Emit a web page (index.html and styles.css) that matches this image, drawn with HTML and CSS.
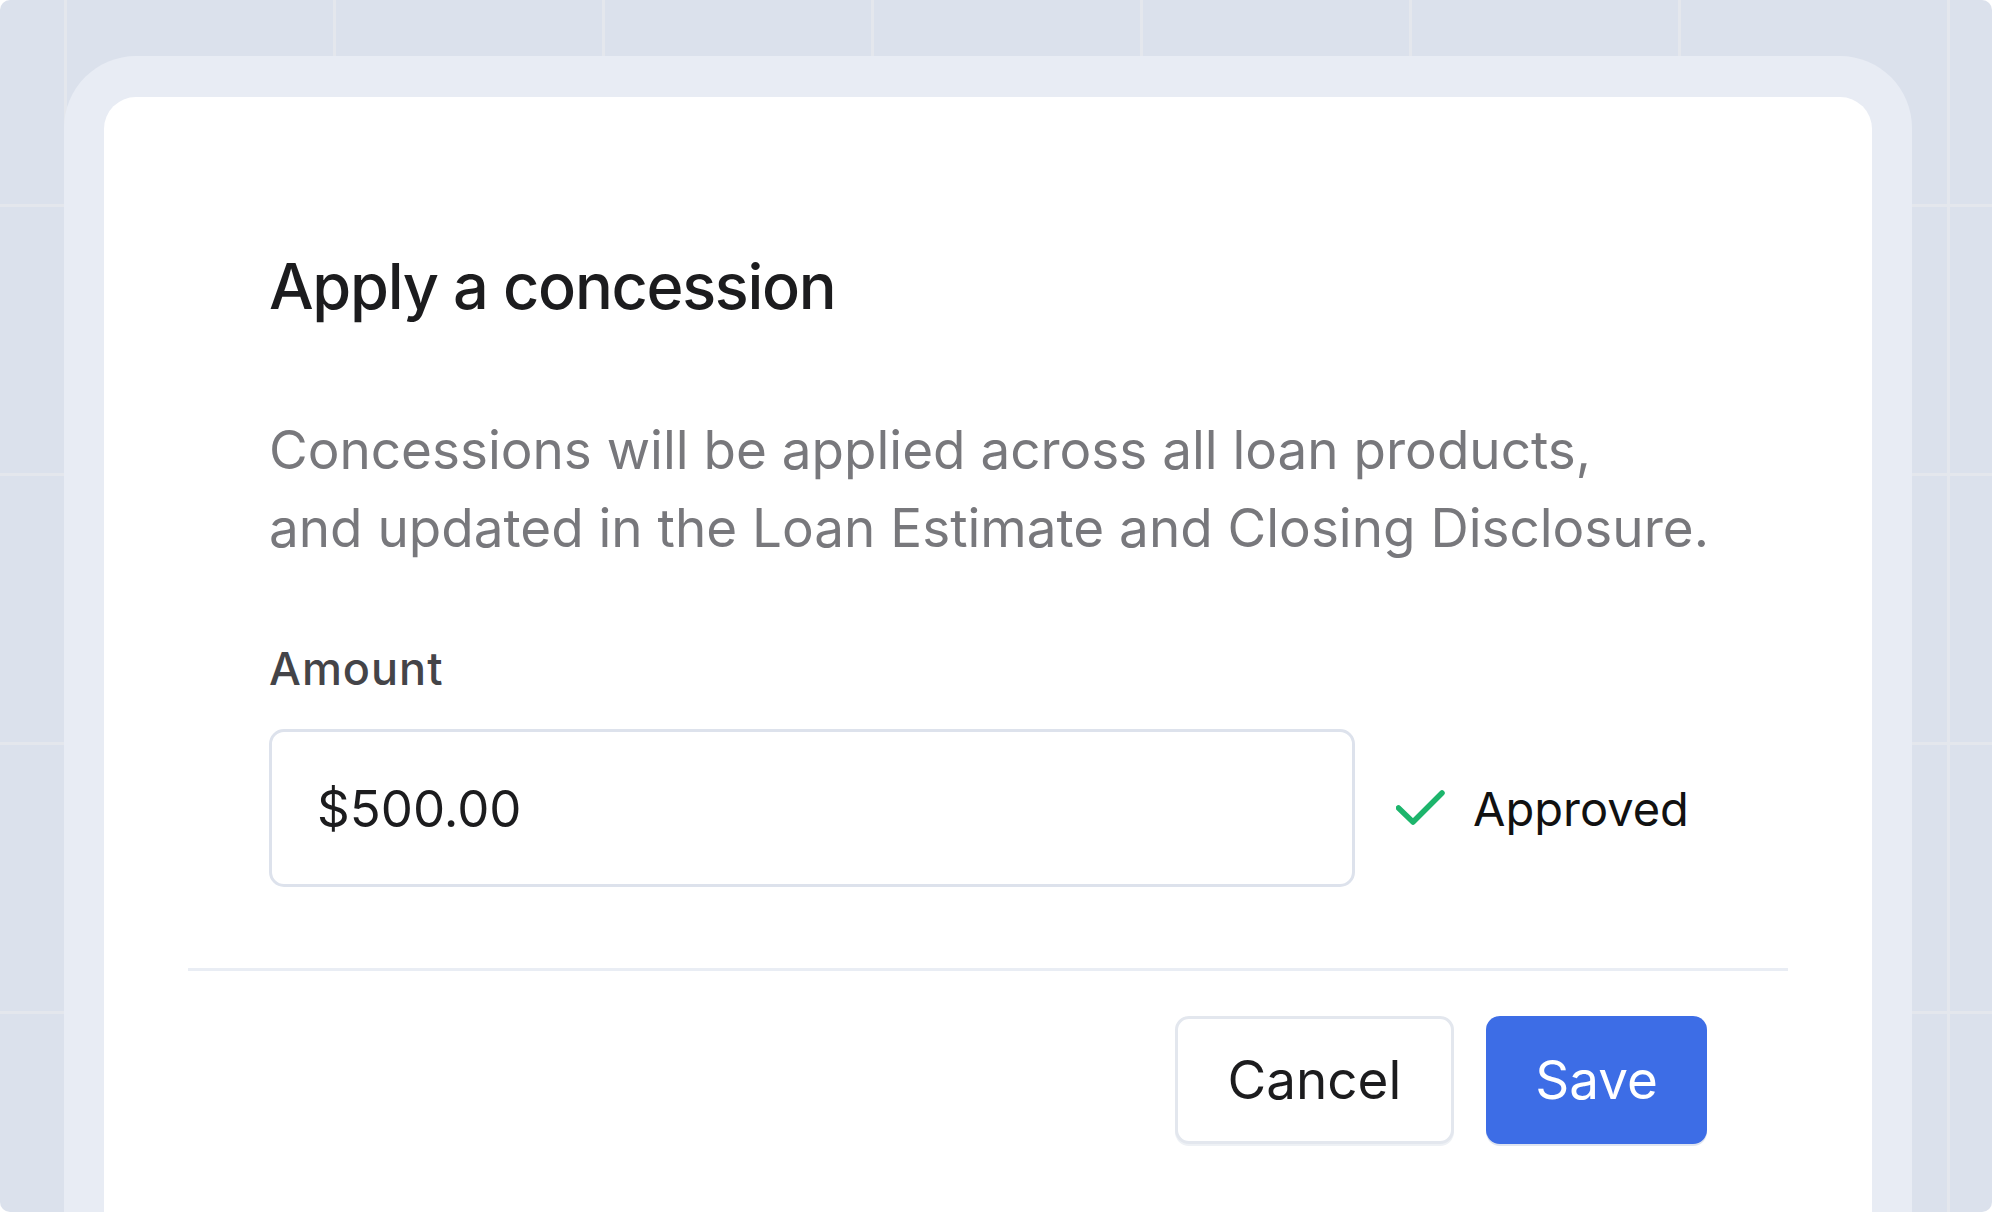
FILE: index.html
```html
<!DOCTYPE html>
<html lang="en">
<head>
<meta charset="utf-8">
<title>Apply a concession</title>
<link rel="stylesheet" href="styles.css">
</head>
<body>
<div class="canvas">
  <div class="frame">
    <div class="card">
      <h1 class="title">Apply a concession</h1>
      <p class="desc">Concessions will be applied across all loan products,<br>and updated in the Loan Estimate and Closing Disclosure.</p>
      <label class="label" for="amount">Amount</label>
      <div class="row">
        <div class="input" id="amount">$500.00</div>
        <div class="status">
          <svg class="check" width="50" height="40" viewBox="0 0 50 40" aria-hidden="true">
            <path d="M2.5 20 L17 34 L46 5" fill="none" stroke="#1db56c" stroke-width="5.5" stroke-linecap="round" stroke-linejoin="round"/>
          </svg>
          <span class="status-text">Approved</span>
        </div>
      </div>
      <div class="divider"></div>
      <div class="actions">
        <button class="btn btn-secondary" type="button">Cancel</button>
        <button class="btn btn-primary" type="button">Save</button>
      </div>
    </div>
  </div>
</div>
</body>
</html>
```

FILE: styles.css
```css
html, body {
  margin: 0;
  padding: 0;
  background: #ffffff;
}

body {
  font-family: "Inter", "Noto Sans", "Liberation Sans", sans-serif;
}

.canvas {
  width: 1992px;
  height: 1212px;
  box-sizing: border-box;
  overflow: hidden;
  border-radius: 10px;
  padding: 56px 80px 0 64px;
  background-color: #dbe1ec;
  background-image:
    linear-gradient(to right, #e4e7ed 0, #e4e7ed 3px, transparent 3px),
    linear-gradient(to bottom, #e4e7ed 0, #e4e7ed 3px, transparent 3px);
  background-size: 269px 269px, 269px 269px;
  background-position: 64px 0, 0 204px;
}

.frame {
  background: #e8ecf4;
  border-radius: 72px 72px 0 0;
  padding: 41px 40px 0 40px;
  min-height: 1300px;
}

.card {
  background: #ffffff;
  border-radius: 32px 32px 0 0;
  padding: 151px 165px 200px 165px;
  min-height: 1200px;
}

.title {
  margin: 0;
  font-size: 63px;
  line-height: 76px;
  font-weight: 500;
  color: #1c1c1e;
  letter-spacing: -1.3px;
}

.desc {
  margin: 87px 0 0 0;
  font-size: 53px;
  line-height: 78px;
  font-weight: 400;
  color: #78787c;
  white-space: nowrap;
}

.label {
  display: block;
  margin-top: 76px;
  font-size: 45px;
  line-height: 52px;
  font-weight: 500;
  color: #444448;
  letter-spacing: 1px;
}

.row {
  display: flex;
  align-items: center;
  margin-top: 34px;
}

.input {
  width: 1086px;
  height: 158px;
  box-sizing: border-box;
  border: 3px solid #dde2ec;
  border-radius: 15px;
  padding-left: 45px;
  display: flex;
  align-items: center;
  font-size: 51px;
  color: #1c1c1e;
}

.status {
  display: flex;
  align-items: center;
  margin-left: 41px;
  gap: 27px;
}

.check {
  display: block;
}

.status-text {
  font-size: 47px;
  color: #111111;
}

.divider {
  height: 3px;
  background: #e9edf4;
  margin: 81px -81px 0 -81px;
}

.actions {
  display: flex;
  justify-content: flex-end;
  gap: 32px;
  margin-top: 45px;
}

.btn {
  height: 128px;
  box-sizing: border-box;
  padding: 0 48px;
  border-radius: 14px;
  font-family: "Inter", "Noto Sans", "Liberation Sans", sans-serif;
  font-size: 53px;
  font-weight: 400;
  cursor: pointer;
}

.btn-secondary {
  background: #ffffff;
  color: #1c1c1e;
  border: 3px solid #e3e7ee;
  box-shadow: 0 2px 0 #eef1f5;
  padding: 0 50px;
}

.btn-primary {
  background: #3d6de6;
  color: #ffffff;
  border: 0;
  padding: 0 49px;
  box-shadow: 0 2px 0 #dfe5f0;
}
```
